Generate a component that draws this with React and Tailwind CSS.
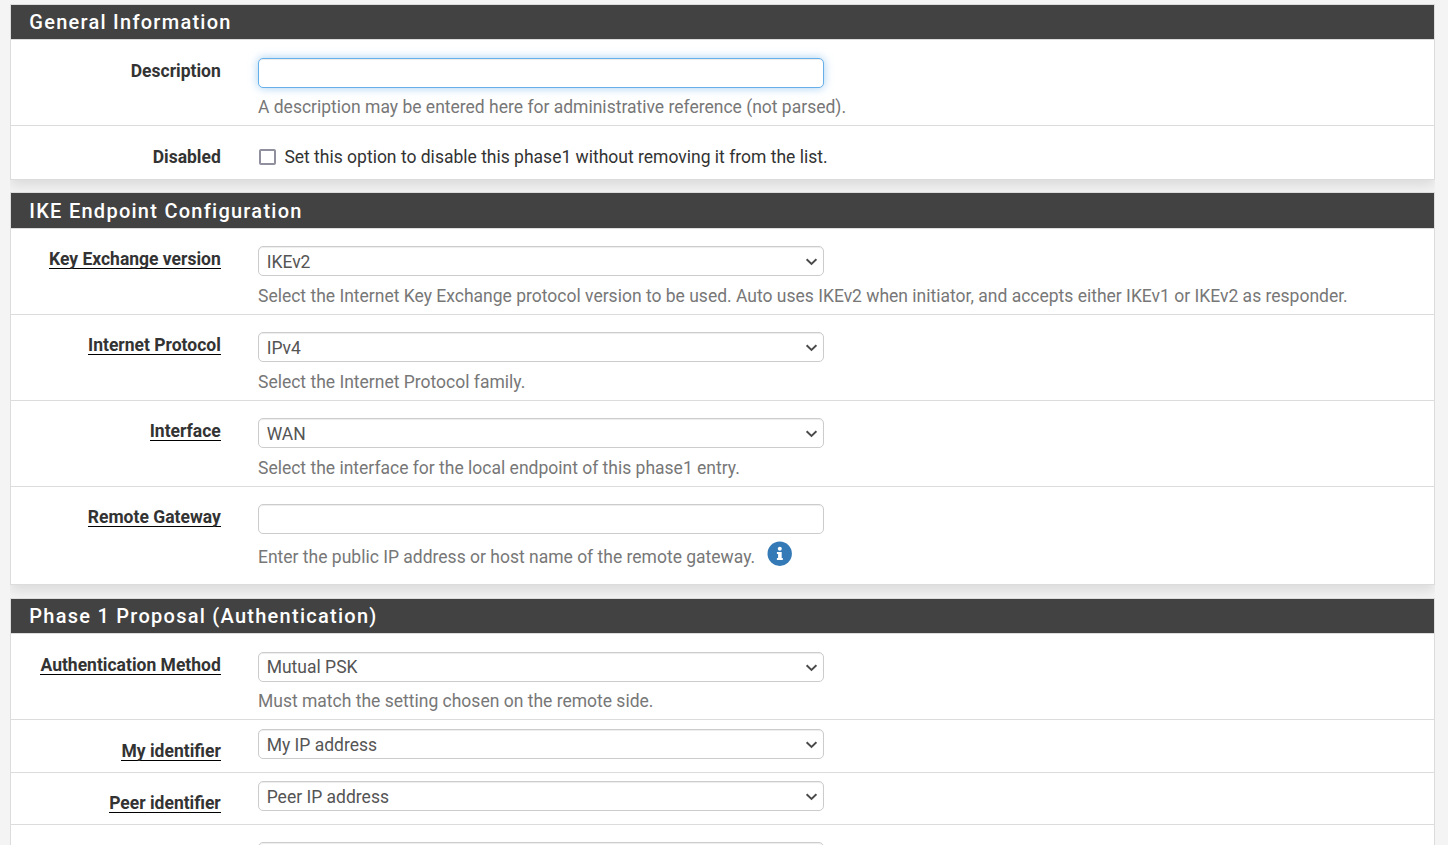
import React from "react";

function Panel({ title, className, headClass, children }) {
  return (
    <section
      className={
        "box-border border border-[#dcdcdc] bg-white shadow-[0_6px_12px_rgba(0,0,0,0.1)] [clip-path:inset(0_0_-14px_0)] " +
        className
      }
    >
      <h2
        className={
          "flex items-center border-b border-[#dcdcdc] bg-[#424242] pl-[18.3px] text-[20px] font-medium leading-none tracking-[1.26px] text-white " +
          headClass
        }
      >
        {title}
      </h2>
      {children}
    </section>
  );
}

function Row({ label, underlined, className, labelClass = "pt-[21px]", bodyClass = "pt-[18px]", children }) {
  return (
    <div className={"flex items-start border-[#dcdcdc] " + className}>
      <div className={"flex w-[209.8px] shrink-0 justify-end " + labelClass}>
        <span
          className={
            "h-[20px] whitespace-nowrap border-b text-[17.5px] font-bold leading-[21px] text-[#333] " +
            (underlined ? "border-black" : "border-transparent")
          }
        >
          {label}
        </span>
      </div>
      <div className={"ml-[37.2px] flex grow flex-col items-start " + bodyClass}>{children}</div>
    </div>
  );
}

function Select({ value, textClass = "pt-px" }) {
  return (
    <div className="flex h-[30px] w-[566px] shrink-0 items-center justify-between rounded-[5px] border border-[#ccc] bg-white pl-[7.7px] pr-[6px] text-[17.5px] leading-[28px] text-[#555] shadow-[inset_0_1px_1px_rgba(0,0,0,0.075)]">
      <span className={textClass}>{value}</span>
      <svg className="mt-px" width="12" height="8" viewBox="0 0 12 8" fill="none" stroke="#4a4a4a" strokeWidth="1.9">
        <path d="M1.6 1.2 L6.5 6 L11.4 1.2" />
      </svg>
    </div>
  );
}

function Help({ children, className = "mt-[8px]" }) {
  return <p className={"whitespace-nowrap text-[17.5px] leading-[22px] text-[#777] " + className}>{children}</p>;
}

export default function App() {
  return (
    <main className="h-[845px] w-[1448px] overflow-hidden bg-[#f4f4f4] pl-[10px] pt-[4px] font-['Roboto',sans-serif]">
      <Panel title="General Information" className="h-[176px] w-[1425px]" headClass="h-[35px]">
        <Row label="Description" className="h-[86px] border-b">
          <input
            aria-label="Description"
            className="h-[30px] w-[566px] rounded-[5px] border border-[#66afe9] bg-white shadow-[inset_0_1px_1px_rgba(0,0,0,0.075),0_0_10px_rgba(102,175,233,0.6)] outline-none"
          />
          <Help>A description may be entered here for administrative reference (not parsed).</Help>
        </Row>
        <Row label="Disabled" className="h-[53px]" bodyClass="pt-[20px]">
          <label className="flex items-center text-[17.5px] leading-[22px] text-[#333]">
            <span className="ml-[1px] mr-[8.4px] box-border h-[16px] w-[17px] rounded-[2px] border-2 border-[#8f8f9d] bg-white" />
            Set this option to disable this phase1 without removing it from the list.
          </label>
        </Row>
      </Panel>

      <Panel title="IKE Endpoint Configuration" className="mt-[12px] h-[393px] w-[1425px]" headClass="h-[36px]">
        <Row label="Key Exchange version" underlined className="h-[86px] border-b" labelClass="pt-[20px]" bodyClass="pt-[17px]">
          <Select value="IKEv2" />
          <Help className="mt-[9px]">
            Select the Internet Key Exchange protocol version to be used. Auto uses IKEv2 when initiator, and accepts either IKEv1 or IKEv2 as responder.
          </Help>
        </Row>
        <Row label="Internet Protocol" underlined className="h-[86px] border-b" labelClass="pt-[20px]" bodyClass="pt-[17px]">
          <Select value="IPv4" />
          <Help className="mt-[9px]">Select the Internet Protocol family.</Help>
        </Row>
        <Row label="Interface" underlined className="h-[86px] border-b" labelClass="pt-[20px]" bodyClass="pt-[17px]">
          <Select value="WAN" />
          <Help className="mt-[9px]">Select the interface for the local endpoint of this phase1 entry.</Help>
        </Row>
        <Row label="Remote Gateway" underlined className="h-[97px]" labelClass="pt-[20px]" bodyClass="pt-[17px]">
          <input
            aria-label="Remote Gateway"
            className="h-[30px] w-[566px] rounded-[5px] border border-[#ccc] bg-white shadow-[inset_0_1px_1px_rgba(0,0,0,0.075)] outline-none"
          />
          <div className="mt-[7px] flex items-start">
            <Help className="mt-[5px]">Enter the public IP address or host name of the remote gateway.</Help>
            <svg className="ml-[11.8px]" width="25" height="25" viewBox="0 0 25 25">
              <circle cx="12.7" cy="12.7" r="12.2" fill="#337ab7" />
              <circle cx="12.8" cy="7.8" r="2" fill="#fff" />
              <path d="M9.9 11h4.8v6h1.1v2H9.9v-2h1.2v-4H9.9z" fill="#fff" />
            </svg>
          </div>
        </Row>
      </Panel>

      <Panel title="Phase 1 Proposal (Authentication)" className="mt-[13px] h-[300px] w-[1425px]" headClass="h-[35px]">
        <Row label="Authentication Method" underlined className="h-[86px] border-b">
          <Select value="Mutual PSK" textClass="pb-px" />
          <Help>Must match the setting chosen on the remote side.</Help>
        </Row>
        <Row label="My identifier" underlined className="h-[53px] border-b" bodyClass="pt-[9px]">
          <Select value="My IP address" />
        </Row>
        <Row label="Peer identifier" underlined className="h-[52px] border-b" labelClass="pt-[20px]" bodyClass="pt-[8px]">
          <Select value="Peer IP address" />
        </Row>
        <Row label="" className="h-[86px]" bodyClass="pt-[17px]">
          <Select value="" />
        </Row>
      </Panel>
    </main>
  );
}
